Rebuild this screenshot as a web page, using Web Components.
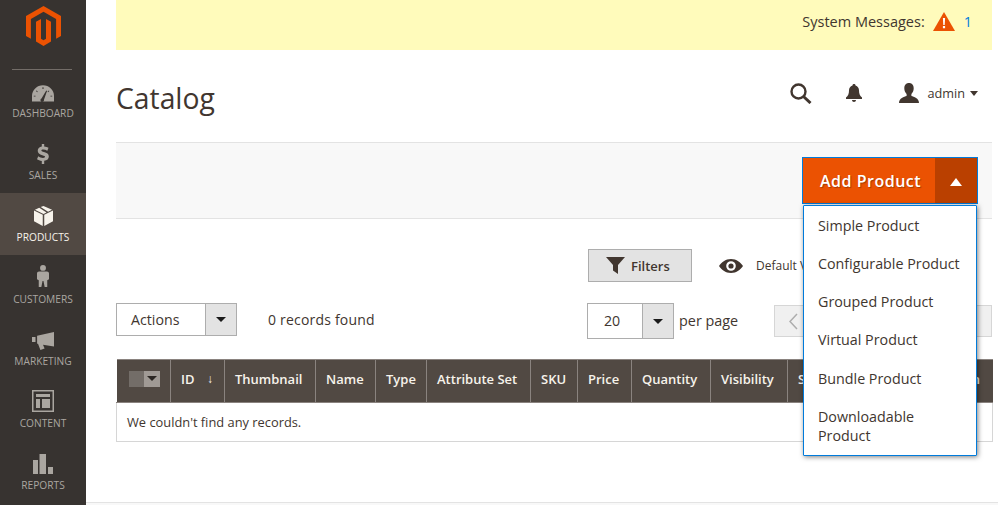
<!DOCTYPE html>
<html>
<head>
<meta charset="utf-8">
<title>Catalog</title>
<style>
  html, body { margin: 0; padding: 0; height: 100%; overflow: hidden; background: #fff; }
  body { font-family: "Open Sans", sans-serif; color: #41362f; }
</style>
</head>
<body>
<mg-app>
  <mg-sidebar slot="sidebar">
    <mg-nav-item icon="dashboard">Dashboard</mg-nav-item>
    <mg-nav-item icon="sales">Sales</mg-nav-item>
    <mg-nav-item icon="products" active>Products</mg-nav-item>
    <mg-nav-item icon="customers">Customers</mg-nav-item>
    <mg-nav-item icon="marketing">Marketing</mg-nav-item>
    <mg-nav-item icon="content">Content</mg-nav-item>
    <mg-nav-item icon="reports">Reports</mg-nav-item>
  </mg-sidebar>
  <mg-notice>System Messages:</mg-notice>
  <mg-header>Catalog</mg-header>
  <mg-action-bar>
    <mg-split-button label="Add Product">
      <mg-menu-item>Simple Product</mg-menu-item>
      <mg-menu-item>Configurable Product</mg-menu-item>
      <mg-menu-item>Grouped Product</mg-menu-item>
      <mg-menu-item>Virtual Product</mg-menu-item>
      <mg-menu-item>Bundle Product</mg-menu-item>
      <mg-menu-item>Downloadable Product</mg-menu-item>
    </mg-split-button>
  </mg-action-bar>
  <mg-toolbar></mg-toolbar>
  <mg-grid></mg-grid>
</mg-app>

<script>
const ICONS = {
  dashboard: `<svg width="22" height="17" viewBox="0 0 25 19"><path fill="currentColor" d="M12.5 0C5.6 0 0 5.4 0 12.3V18.500h25v-6.200C25 5.400 19.400 0 12.500 0z"/><path fill="#373330" d="M10.800 15.200l5.400-9 .9.500-3.500 10a2 2 0 1 1-2.800-1.500zM2 12h2v1H2zM21 12h2v1h-2zM4.500 6.800l.7-.7 1.400 1.400-.7.700zM11.900 2.500h1.200v2h-1.200zM19 6.100l.7.700-1.400 1.400-.7-.7z"/></svg>`,
  sales: `<svg width="12" height="20" viewBox="0 0 15 25"><path fill="currentColor" d="M6 0h3v3.100c2.200.2 4 .8 5.400 1.700l-1.500 3.600C11.300 7.400 9.500 6.800 7.700 6.800c-1.500 0-2.200.5-2.200 1.200 0 .8 1 1.200 3.200 1.900 3.700 1.100 6.100 2.400 6.100 5.700 0 2.900-2 4.900-5.800 5.400V25H6v-3.900c-2.400-.2-4.500-1-6-2.100l1.600-3.600c1.800 1.200 3.900 2 5.900 2 1.700 0 2.500-.5 2.500-1.400 0-.9-1-1.300-3.400-2C3 12.900.9 11.600.9 8.500.9 5.700 2.800 3.700 6 3.200z"/></svg>`,
  products: `<svg width="19" height="20" viewBox="0 0 20 21"><path fill="currentColor" d="M9.200 9.300L0 4.700v11.200l9.200 5.100zM10.800 9.300V21l9.200-5.100V4.700zM5.500 1.800L1 4l9 4.400 3.200-1.600zM14.800 6l4.200-2L10 0 7 1.100z"/></svg>`,
  customers: `<svg width="12" height="24" viewBox="0 0 13 24"><circle fill="currentColor" cx="6.500" cy="3.200" r="3.200"/><path fill="currentColor" d="M2.200 7h8.600c1.200 0 2.200 1 2.200 2.200v6.300l-1.900 1V24H8.300l-1.300-6.600h-1L4.700 24H1.900v-7.500l-1.900-1V9.200C0 8 1 7 2.200 7z"/></svg>`,
  marketing: `<svg width="22" height="18" viewBox="0 0 22 18"><path fill="currentColor" d="M22 0v14.500L11 12.800l1.600 3.700-4.200 1.500-2.400-6.200-.9-.1V3.800zM0 5h3.500v5H0z"/></svg>`,
  content: `<svg width="22" height="22" viewBox="0 0 22 22"><path fill="currentColor" fill-rule="evenodd" d="M0 0h22v22H0zM1.500 1.500v19h19v-19z"/><path fill="currentColor" d="M4 4h14v3H4zM4 9h4v9H4zM10 9h8v9h-8z"/></svg>`,
  reports: `<svg width="20" height="20" viewBox="0 0 20 20"><path fill="currentColor" d="M0 6h5v14H0zM6.500 0H13v20H6.500zM15 13h5v7h-5z"/></svg>`
}

class MgApp extends HTMLElement {
  constructor () {
    super()
    this.attachShadow({ mode: 'open' })
    this.shadowRoot.innerHTML = `
      <style>
      :host { display: grid; grid-template-columns: 86px 1fr; width: 998px; height: 505px; overflow: hidden; }
      .main { display: flex; flex-direction: column; min-width: 0; height: 505px; }
      .page { flex: 1; padding: 0 6px 0 30px; display: flex; flex-direction: column; min-height: 0; }
      .foot { height: 2px; border-top: 1px solid #e3e3e3; background: #f8f8f8; }
      </style>
      <slot name="sidebar"></slot>
      <div class="main">
        <div class="page"><slot></slot></div>
        <div class="foot"></div>
      </div>
    `
  }
}

class MgSidebar extends HTMLElement {
  constructor () {
    super()
    this.attachShadow({ mode: 'open' })
    this.shadowRoot.innerHTML = `
      <style>
      :host { display: block; background: #373330; height: 505px; }
      .logo { display: flex; justify-content: center; padding-top: 6px; height: 69px; box-sizing: border-box; }
      hr { margin: 0 14px 0 12px; border: 0; border-top: 1px solid #736d68; height: 0; }
      .items { margin-top: -1px; }
      </style>
      <div class="logo">
        <svg width="35" height="40" viewBox="0 0 35 40"><path fill="#eb5202" d="M17.500 0L35 10.100V30l-4.900 2.800V12.900L17.500 5.700 4.900 12.900v19.900L0 30V10.100zM10 15.800l5-2.900v19.900l2.500 1.500 2.500-1.500V12.900l5 2.900v19.800L17.500 40 10 35.600z"/></svg>
      </div>
      <hr>
      <div class="items"><slot></slot></div>
    `
  }
}

class MgNavItem extends HTMLElement {
  constructor () {
    super()
    this.attachShadow({ mode: 'open' })
  }

  connectedCallback () {
    const icon = ICONS[this.getAttribute('icon')]
    this.shadowRoot.innerHTML = `
      <style>
      :host { display: flex; flex-direction: column; align-items: center; height: 62px; color: #aaa6a0; font-size: 10.2px; box-sizing: border-box; }
      :host([active]) { background: #514943; color: #f7f3eb; }
      .icon { height: 33px; display: flex; align-items: flex-end; justify-content: center; }
      .icon svg { display: block; }
      .label { text-transform: uppercase; line-height: 14px; margin-top: 4px; }
      </style>
      <div class="icon">${icon}</div>
      <div class="label"><slot></slot></div>
    `
  }
}

class MgNotice extends HTMLElement {
  constructor () {
    super()
    this.attachShadow({ mode: 'open' })
    this.shadowRoot.innerHTML = `
      <style>
      :host { display: flex; align-items: center; justify-content: flex-end; height: 50px; flex: none; box-sizing: border-box; background: #fffbbb; padding: 0 20px 7px 0; font-size: 14.5px; color: #41362f; }
      svg { margin: 0 9px 0 8px; }
      a { color: #007bdb; text-decoration: none; }
      </style>
      <slot></slot>
      <svg width="22" height="19" viewBox="0 0 22 19"><path fill="#eb5202" d="M11 0l11 19H0z"/><path fill="#fff" d="M9.900 6h2.200l-.4 7h-1.400zM9.900 14h2.200v2.200H9.900z"/></svg>
      <a href="#">1</a>
    `
  }
}

class MgHeader extends HTMLElement {
  constructor () {
    super()
    this.attachShadow({ mode: 'open' })
    this.shadowRoot.innerHTML = `
      <style>
      :host { display: flex; align-items: flex-start; height: 92px; flex: none; padding-right: 14px; box-sizing: border-box; }
      h1 { margin: 0 auto 0 0; font-size: 28.3px; font-weight: 400; color: #41362f; line-height: 88px; padding-top: 4px; }
      .tools { display: flex; align-items: center; color: #41362f; height: 92px; margin-top: -3px; }
      .user { font-size: 12.7px; margin: 0 5px 0 8px; }
      .caret { width: 0; height: 0; border: 4px solid transparent; border-top: 5px solid #41362f; border-bottom: 0; }
      svg { display: block; }
      </style>
      <h1><slot></slot></h1>
      <div class="tools">
        <svg width="22" height="21" viewBox="0 0 22 21" style="margin-right:34px"><circle cx="8.500" cy="8.500" r="7" fill="none" stroke="#41362f" stroke-width="2.400"/><path d="M13.500 13.500L20.500 20" stroke="#41362f" stroke-width="3" fill="none"/></svg>
        <svg width="16" height="18" viewBox="0 0 16 18" style="margin-right:37px"><path fill="#41362f" d="M8 0c1 0 1.500.6 1.500 1.400 2.300.7 3.500 2.600 3.500 5.100 0 3.500 1 5.300 3 7V15H0v-1.500c2-1.700 3-3.500 3-7 0-2.500 1.200-4.400 3.500-5.100C6.500.6 7 0 8 0zM6 16h4c0 1.200-.9 2-2 2s-2-.8-2-2z"/></svg>
        <svg width="20" height="20" viewBox="0 0 20 20"><path fill="#41362f" d="M10 0c3 0 4.700 2.200 4.700 5.200 0 2.300-.9 4.400-2.300 5.700v2c2.400.9 7.600 2.100 7.600 7H0c0-4.900 5.200-6.100 7.600-7v-2C6.200 9.600 5.300 7.500 5.300 5.200 5.300 2.200 7 0 10 0z"/></svg>
        <span class="user">admin</span>
        <span class="caret"></span>
      </div>
    `
  }
}

class MgActionBar extends HTMLElement {
  constructor () {
    super()
    this.attachShadow({ mode: 'open' })
    this.shadowRoot.innerHTML = `
      <style>
      :host { display: flex; justify-content: flex-end; align-items: flex-start; flex: none; height: 77px; box-sizing: border-box; padding: 14px 14px 0 0; background: #f8f8f8; border-top: 1px solid #e3e3e3; border-bottom: 1px solid #e3e3e3; }
      </style>
      <slot></slot>
    `
  }
}

class MgSplitButton extends HTMLElement {
  constructor () {
    super()
    this.attachShadow({ mode: 'open' })
  }

  connectedCallback () {
    this.shadowRoot.innerHTML = `
      <style>
      :host { display: block; position: relative; z-index: 5; }
      .btn { display: flex; width: 176px; height: 47px; box-sizing: border-box; border: 1px solid #007bdb; background: #eb5202; color: #fff; font-size: 16px; font-weight: 600; letter-spacing: .5px; text-shadow: 1px 1px 1px rgba(0,0,0,.3); }
      .text { flex: 1; display: flex; align-items: center; padding-left: 17px; }
      .toggle { width: 42px; background: #ba4000; display: flex; align-items: center; justify-content: center; }
      .toggle i { width: 0; height: 0; border: 6px solid transparent; border-bottom: 8px solid #fff; border-top: 0; margin-top: 3px; }
      .menu { position: absolute; top: 48px; left: 1px; width: 174px; box-sizing: border-box; background: #fff; border: 1px solid #007bdb; border-radius: 1px; box-shadow: 1px 1px 5px rgba(0,0,0,.5); padding: 0 0 1px; }
      </style>
      <div class="btn">
        <span class="text">${this.getAttribute('label')}</span>
        <span class="toggle"><i></i></span>
      </div>
      <div class="menu"><slot></slot></div>
    `
  }
}

class MgMenuItem extends HTMLElement {
  constructor () {
    super()
    this.attachShadow({ mode: 'open' })
    this.shadowRoot.innerHTML = `
      <style>
      :host { display: block; padding: 9.7px 14px 9.55px; font-size: 14.3px; line-height: 19px; color: #41362f; }
      </style>
      <slot></slot>
    `
  }
}

class MgSelect extends HTMLElement {
  constructor () {
    super()
    this.attachShadow({ mode: 'open' })
    this.shadowRoot.innerHTML = `
      <style>
      :host { display: flex; box-sizing: border-box; border: 1px solid #adadad; background: #fff; font-size: 14.2px; color: #41362f; }
      .val { flex: 1; display: flex; align-items: center; padding-left: var(--select-pad, 14px); padding-bottom: var(--select-lift, 0); }
      .arrow { width: 30px; border-left: 1px solid #adadad; background: #e3e3e3; display: flex; align-items: center; justify-content: center; }
      .arrow i { width: 0; height: 0; border: 5px solid transparent; border-top: 5px solid #1a1a1a; border-bottom: 0; }
      </style>
      <span class="val"><slot></slot></span>
      <span class="arrow"><i></i></span>
    `
  }
}

class MgToolbar extends HTMLElement {
  constructor () {
    super()
    this.attachShadow({ mode: 'open' })
    this.shadowRoot.innerHTML = `
      <style>
      :host { display: block; flex: none; }
      .row1 { display: flex; align-items: center; height: 33px; margin-top: 30px; padding-left: 472px; }
      .filters { display: flex; align-items: center; width: 104px; height: 33px; box-sizing: border-box; border: 1px solid #adadad; background: #e3e3e3; font-size: 13px; font-weight: 600; color: #41362f; padding-left: 17px; }
      .filters svg { margin-right: 6px; }
      .eye { margin-left: 27px; margin-right: 13px; display: block; }
      .view { font-size: 12px; white-space: nowrap; }
      .row2 { display: flex; align-items: flex-start; margin-top: 21px; height: 36px; }
      .actions { width: 121px; height: 33px; }
      .found { font-size: 14px; margin-left: 31px; line-height: 33px; width: 319px; letter-spacing: .2px; }
      .size { width: 87px; height: 36px; --select-pad: 16px; --select-lift: 1px; }
      .per { font-size: 14.4px; margin-left: 5px; line-height: 36px; width: 95px; }
      .pager { width: 218px; height: 32px; margin-top: 2px; box-sizing: border-box; border: 1px solid #d6d6d6; background: #f0f0f0; display: flex; align-items: center; padding-left: 14px; }
      </style>
      <div class="row1">
        <div class="filters">
          <svg width="19" height="17" viewBox="0 0 19 17"><path fill="#41362f" d="M0 0h19l-7 8v9l-5-3.500V8z"/></svg>
          <span>Filters</span>
        </div>
        <svg class="eye" width="24" height="14" viewBox="0 0 24 14"><path fill="#41362f" fill-rule="evenodd" d="M12 0c5.500 0 9.800 3.500 12 7-2.200 3.500-6.500 7-12 7S2.200 10.500 0 7c2.200-3.500 6.500-7 12-7zm0 2.200a4.800 4.800 0 1 0 0 9.600 4.800 4.800 0 0 0 0-9.600z"/><circle cx="12" cy="7" r="2.600" fill="#41362f"/></svg>
        <span class="view">Default View</span>
      </div>
      <div class="row2">
        <mg-select class="actions">Actions</mg-select>
        <span class="found">0 records found</span>
        <mg-select class="size">20</mg-select>
        <span class="per">per page</span>
        <div class="pager">
          <svg width="9" height="17" viewBox="0 0 9 17"><path d="M8 1L1 8.500 8 16" fill="none" stroke="#adadad" stroke-width="1.500"/></svg>
        </div>
      </div>
    `
  }
}

class MgGrid extends HTMLElement {
  constructor () {
    super()
    this.attachShadow({ mode: 'open' })
  }

  connectedCallback () {
    const cols = [
      ['', 54], ['ID', 54], ['Thumbnail', 91], ['Name', 60], ['Type', 51], ['Attribute Set', 104],
      ['SKU', 47], ['Price', 54], ['Quantity', 79], ['Visibility', 77], ['Status', 65], ['Websites', 77], ['Action', 63]
    ]
    const head = cols.map(([name], i) => {
      if (i === 0) return '<th class="check"><span class="box"><b><i></i></b></span></th>'
      if (i === 1) return `<th><span class="id">${name}<em>↓</em></span></th>`
      return `<th>${name}</th>`
    }).join('')
    this.shadowRoot.innerHTML = `
      <style>
      :host { display: block; flex: none; margin-top: 20px; }
      table { border-collapse: collapse; table-layout: fixed; width: 876px; font-size: 13px; }
      th { background: #514943; color: #f7f3eb; height: 43px; padding: 0 0 5px 10px; box-sizing: border-box; font-weight: 600; text-align: left; white-space: nowrap; overflow: hidden; border-left: 1px solid #8a837f; border-top: 1px solid #8a837f; border-bottom: 1px solid #8a837f; }
      th:first-child { border-left: 0; }
      th.check { padding-left: 12px; }
      .box { display: flex; justify-content: flex-end; width: 31px; height: 16px; background: #736d68; }
      .box b { width: 16px; height: 16px; background: #a09a95; display: flex; align-items: center; justify-content: center; }
      .box i { width: 0; height: 0; border: 5px solid transparent; border-top: 5px solid #2b2623; border-bottom: 0; }
      .id { display: flex; justify-content: space-between; padding-right: 11px; }
      em { font-style: normal; font-weight: 400; font-size: 12px; }
      td { height: 39px; box-sizing: border-box; padding: 0 10px; font-size: 12.85px; color: #41362f; border: 1px solid #d6d6d6; border-top: 0; }
      </style>
      <table>
        <colgroup>${cols.map(c => `<col style="width:${c[1]}px">`).join('')}</colgroup>
        <tr>${head}</tr>
        <tr><td colspan="${cols.length}">We couldn't find any records.</td></tr>
      </table>
    `
  }
}

window.customElements.define('mg-app', MgApp)
window.customElements.define('mg-sidebar', MgSidebar)
window.customElements.define('mg-nav-item', MgNavItem)
window.customElements.define('mg-notice', MgNotice)
window.customElements.define('mg-header', MgHeader)
window.customElements.define('mg-action-bar', MgActionBar)
window.customElements.define('mg-split-button', MgSplitButton)
window.customElements.define('mg-menu-item', MgMenuItem)
window.customElements.define('mg-select', MgSelect)
window.customElements.define('mg-toolbar', MgToolbar)
window.customElements.define('mg-grid', MgGrid)
</script>
</body>
</html>
